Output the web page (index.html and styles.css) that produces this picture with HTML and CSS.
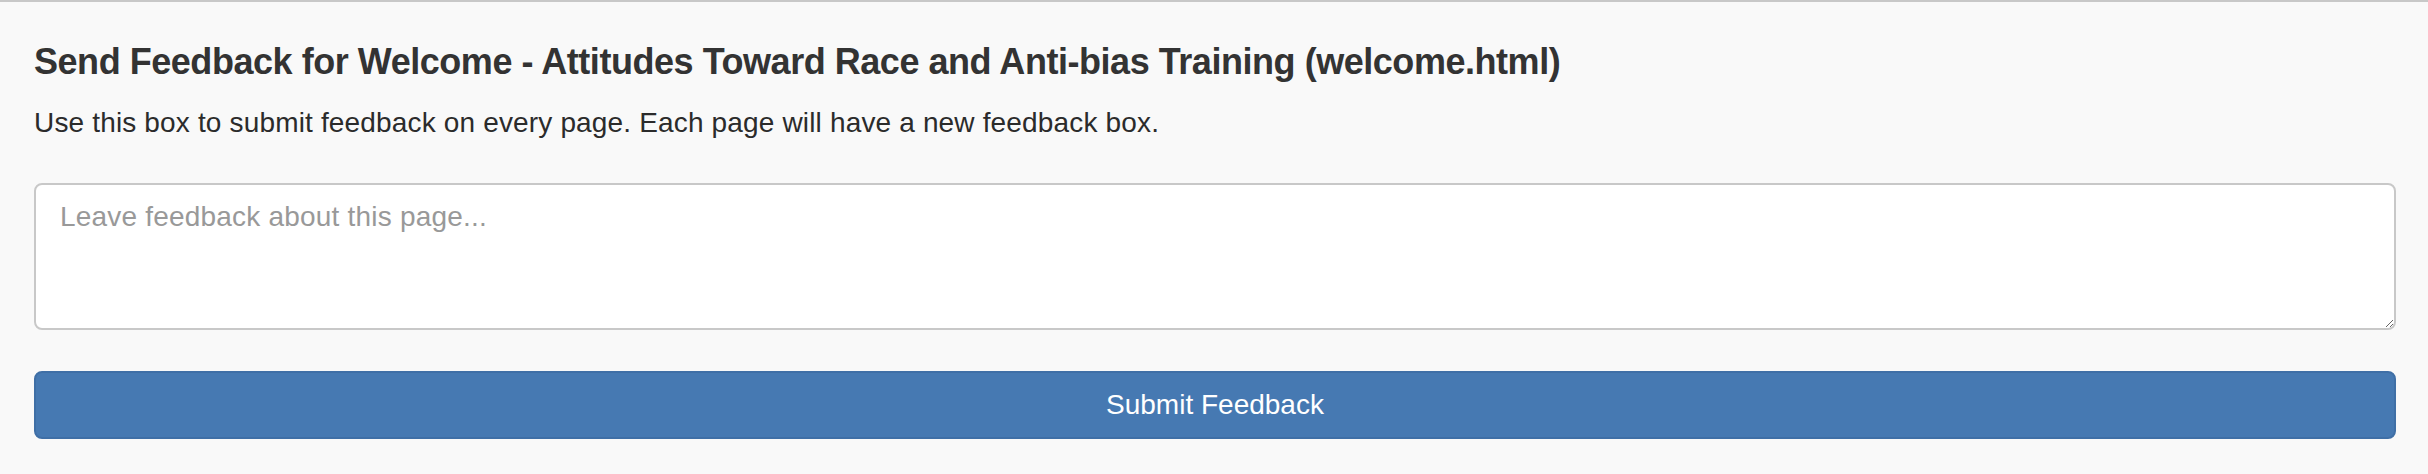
FILE: index.html
```html
<!DOCTYPE html>
<html lang="en">
<head>
<meta charset="utf-8">
<title>Send Feedback</title>
<link rel="stylesheet" href="styles.css">
</head>
<body>
<div class="feedback">
  <h3 class="feedback-title">Send Feedback for Welcome - Attitudes Toward Race and Anti-bias Training (welcome.html)</h3>
  <p class="feedback-desc">Use this box to submit feedback on every page. Each page will have a new feedback box.</p>
  <form class="feedback-form">
    <textarea class="feedback-input" placeholder="Leave feedback about this page..."></textarea>
    <button type="button" class="feedback-submit">Submit Feedback</button>
  </form>
</div>
</body>
</html>
```

FILE: styles.css
```css
html, body {
  margin: 0;
  padding: 0;
  background: #f9f9f9;
}
body {
  font-family: "Liberation Sans", Arial, Helvetica, sans-serif;
  color: #333333;
  height: 474px;
  overflow: hidden;
}
.feedback {
  border-top: 2px solid #c8c8c8;
  padding: 40px 32px 0 34px;
  display: flex;
  flex-direction: column;
}
.feedback-title {
  margin: 0;
  font-size: 36px;
  line-height: 39.6px;
  font-weight: bold;
  letter-spacing: -0.46px;
  color: #333333;
}
.feedback-desc {
  margin: 21px 0 0;
  font-size: 28px;
  line-height: 40px;
  letter-spacing: 0.16px;
  color: #2b2b2b;
}
.feedback-form {
  margin: 40px 0 0;
  display: flex;
  flex-direction: column;
  gap: 41px;
}
.feedback-input {
  box-sizing: border-box;
  height: 147px;
  width: 100%;
  margin: 0;
  padding: 12px 24px;
  border: 2px solid #c8c8c8;
  border-radius: 8px;
  background: #ffffff;
  font-family: "Liberation Sans", Arial, Helvetica, sans-serif;
  font-size: 28px;
  line-height: 40px;
  letter-spacing: 0.2px;
  color: #555555;
  resize: vertical;
  outline: none;
}
.feedback-input::placeholder {
  color: #999999;
  opacity: 1;
}
.feedback-submit {
  box-sizing: border-box;
  height: 68px;
  width: 100%;
  margin: 0;
  padding: 0;
  border: 2px solid #3f6fa6;
  border-radius: 8px;
  background: #4679b2;
  color: #ffffff;
  font-family: "Liberation Sans", Arial, Helvetica, sans-serif;
  font-size: 28px;
  line-height: 40px;
  cursor: pointer;
}
```
